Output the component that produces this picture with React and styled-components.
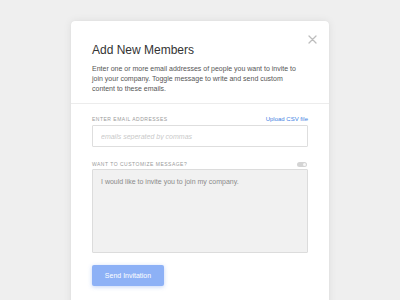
import React from "react";
import styled, { createGlobalStyle } from "styled-components";

const Global = createGlobalStyle`
  html, body { margin: 0; padding: 0; background: #efefef; }
  body { font-family: "Liberation Sans", Arial, sans-serif; width: 400px; height: 300px; overflow: hidden; }
  * { box-sizing: border-box; }
`;

const Page = styled.div`
  padding-top: 21px;
  height: 300px;
`;

const Modal = styled.div`
  position: relative;
  width: 258px;
  margin: 0 auto;
  height: 290px;
  background: #fff;
  border-radius: 4px;
  box-shadow: 0 0 8px rgba(0, 0, 0, 0.08), 0 0 1px rgba(0, 0, 0, 0.08);
`;

const Close = styled.button`
  position: absolute;
  top: 13px;
  right: 12px;
  width: 10px;
  height: 10px;
  padding: 0;
  border: 0;
  background: transparent;
  display: flex;
  align-items: center;
  justify-content: center;
`;

const Header = styled.div`
  padding: 22px 21px 9px;
  border-bottom: 1px solid #ececec;
`;

const Title = styled.h1`
  margin: 0;
  font-size: 12px;
  line-height: 14px;
  font-weight: 400;
  color: #333;
`;

const Intro = styled.p`
  margin: 7px 0 0;
  max-width: 208px;
  font-size: 7px;
  line-height: 10px;
  color: #555;
`;

const Body = styled.div`
  padding: 11px 21px 0;
  display: flex;
  flex-direction: column;
`;

const LabelRow = styled.div`
  height: 8px;
  display: flex;
  align-items: center;
  justify-content: space-between;
  margin-top: ${(p) => p.$top || 0}px;
  margin-bottom: ${(p) => p.$bottom || 0}px;
`;

const Label = styled.span`
  font-size: 5px;
  letter-spacing: 0.5px;
  color: #9a9a9a;
  text-transform: uppercase;
`;

const Link = styled.a`
  font-size: 6px;
  color: #3f7fe3;
  text-decoration: none;
`;

const Input = styled.input`
  display: block;
  width: 100%;
  height: 22px;
  border: 1px solid #dedede;
  border-radius: 1px;
  padding: 0 8px;
  font-family: inherit;
  font-size: 7px;
  outline: none;
  &::placeholder {
    color: #c9c9c9;
    font-style: italic;
  }
`;

const Toggle = styled.span`
  width: 10px;
  height: 5px;
  margin-right: 1px;
  border-radius: 3px;
  background: #d4d4d4;
  display: flex;
  justify-content: flex-end;
  align-items: center;
  padding: 0 1px;
`;

const Knob = styled.span`
  width: 3px;
  height: 3px;
  border-radius: 50%;
  background: #f7f7f7;
`;

const Area = styled.textarea`
  display: block;
  width: 100%;
  height: 84px;
  resize: none;
  border: 1px solid #dcdcdc;
  border-radius: 1px;
  background: #f1f1f1;
  padding: 7px 8px;
  font-family: inherit;
  font-size: 7px;
  line-height: 10px;
  color: #8a8a8a;
  outline: none;
`;

const Button = styled.button`
  align-self: flex-start;
  margin-top: 12px;
  width: 72px;
  height: 21px;
  border: 0;
  border-radius: 2px;
  background: #8db1f6;
  color: #fff;
  font-family: inherit;
  font-size: 7px;
  box-shadow: 0 1px 4px rgba(120, 160, 240, 0.45);
`;

export default function App() {
  return (
    <Page>
      <Global />
      <Modal>
        <Close aria-label="Close">
          <svg width="9" height="9" viewBox="0 0 9 9">
            <path d="M1 1L8 8M8 1L1 8" stroke="#bdbdbd" strokeWidth="1.3" strokeLinecap="round" />
          </svg>
        </Close>
        <Header>
          <Title>Add New Members</Title>
          <Intro>
            Enter one or more email addresses of people you want to invite to join your company. Toggle message to write and send custom content to these emails.
          </Intro>
        </Header>
        <Body>
          <LabelRow $bottom={2}>
            <Label>Enter email addresses</Label>
            <Link href="#">Upload CSV file</Link>
          </LabelRow>
          <Input placeholder="emails seperated by commas" />
          <LabelRow $top={13} $bottom={1}>
            <Label>Want to customize message?</Label>
            <Toggle>
              <Knob />
            </Toggle>
          </LabelRow>
          <Area readOnly defaultValue="I would like to invite you to join my company." />
          <Button>Send Invitation</Button>
        </Body>
      </Modal>
    </Page>
  );
}
